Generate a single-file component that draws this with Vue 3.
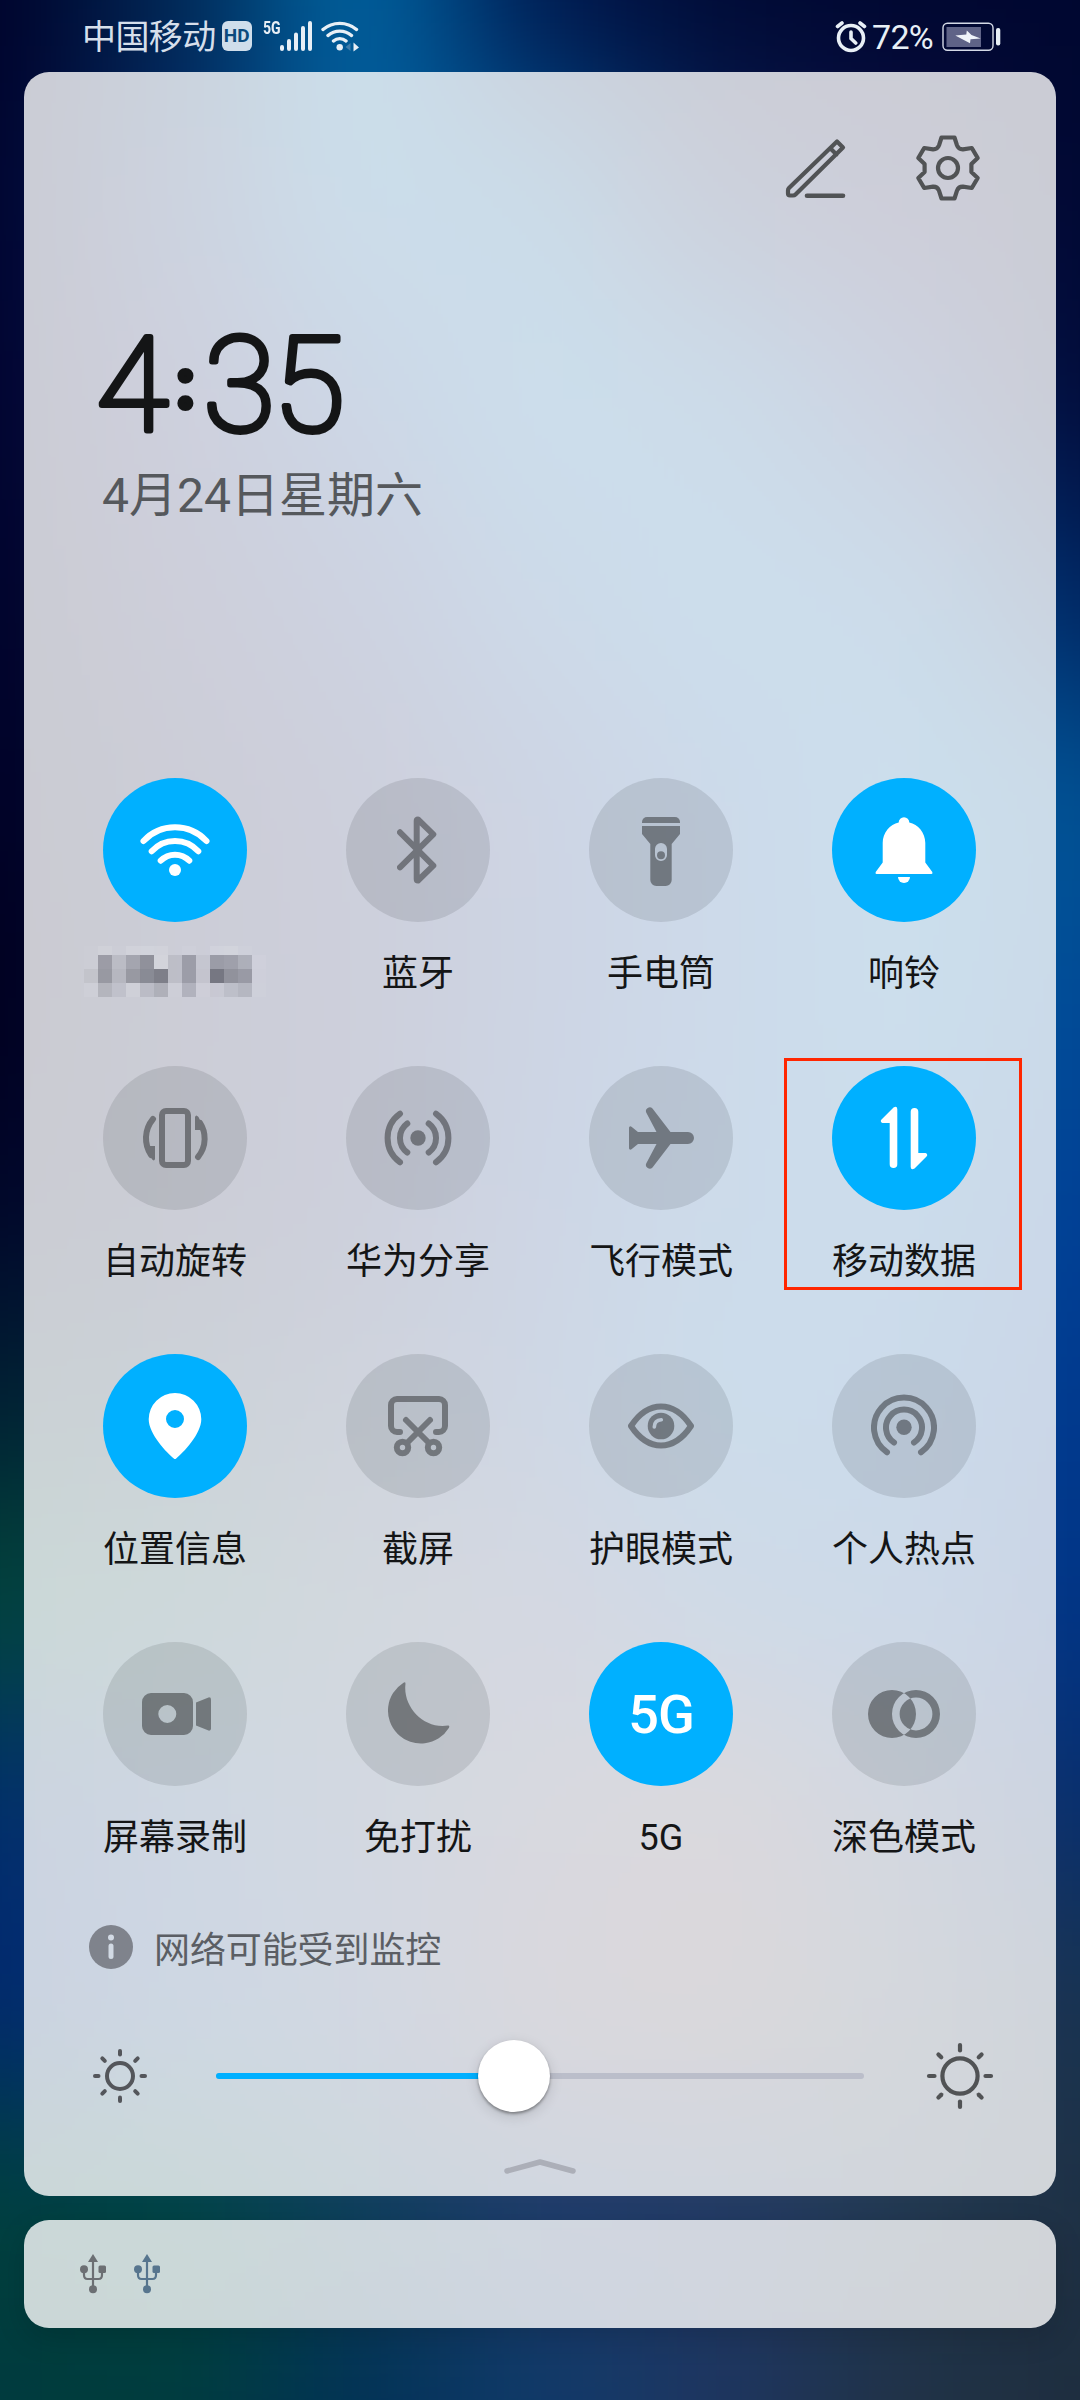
<script setup>
const meshX = [0, 180, 360, 540, 720, 900, 1080]
const meshRows = [
  ['0,2,42', '0,40,84', '0,104,166', '0,24,78', '0,10,52', '0,7,48', '0,7,48'],
  ['0,3,46', '8,42,106', '4,96,160', '2,86,150', '10,30,85', '12,14,70', '0,8,50'],
  ['0,3,46', '18,26,92', '10,62,138', '4,98,166', '5,85,153', '14,42,112', '0,10,55'],
  ['0,3,42', '12,20,76', '15,38,110', '10,76,150', '5,97,167', '5,87,157', '0,35,95'],
  ['0,2,38', '5,12,62', '15,25,85', '15,50,125', '10,76,156', '5,101,171', '0,80,145'],
  ['0,0,30', '5,12,60', '12,24,82', '15,50,125', '10,76,156', '5,100,168', '0,72,148'],
  ['0,5,40', '5,14,60', '12,24,84', '15,55,130', '10,82,158', '5,90,162', '0,62,148'],
  ['0,32,50', '5,36,66', '25,45,90', '20,62,130', '5,90,162', '5,80,158', '0,55,140'],
  ['0,70,58', '14,72,76', '38,65,95', '50,65,115', '20,76,142', '10,75,150', '0,50,132'],
  ['0,46,106', '20,60,120', '40,70,112', '65,70,105', '80,70,90', '42,65,112', '5,45,110'],
  ['0,38,110', '15,64,128', '38,62,120', '75,65,90', '80,65,80', '50,65,90', '22,50,80'],
  ['0,64,62', '0,70,66', '15,65,92', '30,60,110', '32,60,105', '34,58,82', '30,48,68'],
  ['0,58,62', '0,60,60', '0,48,85', '15,58,105', '30,52,95', '32,50,70', '30,45,62'],
]
const cells = meshRows.flatMap((row, r) =>
  row.map((c, i) => ({
    x: i === 0 ? -400 : meshX[i] - 90,
    w: i === 0 ? 491 : i === 6 ? 490 : 181,
    y: r === 0 ? -400 : r * 200 - 100,
    h: r === 0 ? 501 : r === 12 ? 500 : 201,
    fill: `rgb(${c})`,
  })),
)

const tiles = [
  { id: 'wifi', label: '', on: true },
  { id: 'bluetooth', label: '蓝牙' },
  { id: 'torch', label: '手电筒' },
  { id: 'bell', label: '响铃', on: true },
  { id: 'rotate', label: '自动旋转' },
  { id: 'share', label: '华为分享' },
  { id: 'plane', label: '飞行模式' },
  { id: 'data', label: '移动数据', on: true, marked: true },
  { id: 'location', label: '位置信息', on: true },
  { id: 'screenshot', label: '截屏' },
  { id: 'eye', label: '护眼模式' },
  { id: 'hotspot', label: '个人热点' },
  { id: 'record', label: '屏幕录制' },
  { id: 'moon', label: '免打扰' },
  { id: 'fiveg', label: '5G', on: true },
  { id: 'dark', label: '深色模式' },
]

// Shade of every mosaic cell that hides the network name; negative is lighter than the panel
const mosaic = [
  [-3, -10, -3, -12, -12, -10, 0, -5, 0, -10, -12, -5, 0],
  [-3, 23, 8, 19, 29, -14, 7, 23, 3, 24, 22, 15, -6],
  [4, 25, 10, 25, 32, 38, 7, 23, 4, 42, 29, 25, -4],
  [-7, 11, 5, -8, 8, 14, -3, 13, -4, 2, 7, 11, -5],
].flat()
const shade = (v) => (v < 0 ? `rgba(255,255,255,${-v / 100})` : `rgba(0,0,12,${v / 100})`)
const rays = [0, 45, 90, 135, 180, 225, 270, 315]
</script>

<template>
  <div class="screen">
    <svg class="wallpaper" viewBox="0 0 1080 2400" aria-hidden="true">
      <defs>
        <filter id="soft" filterUnits="userSpaceOnUse" x="-400" y="-400" width="1880" height="3200" color-interpolation-filters="sRGB">
          <feGaussianBlur stdDeviation="74 82" />
        </filter>
      </defs>
      <g filter="url(#soft)">
        <rect v-for="(c, i) in cells" :key="i" :x="c.x" :y="c.y" :width="c.w" :height="c.h" :fill="c.fill" />
      </g>
    </svg>

    <header class="status">
      <span class="carrier">中国移动</span>
      <span class="hd">HD</span>
      <span class="net">5G</span>
      <svg class="bars" width="32" height="30" viewBox="0 0 32 30" stroke="#e8eff6" stroke-width="4" stroke-linecap="round">
        <path d="M2 26v2M9 20v8M16 13.5V28M23 7v21M30 2v26" />
      </svg>
      <svg class="swifi" width="38" height="32" viewBox="0 0 38 32" fill="none" stroke="#e8eff6" stroke-width="3.4" stroke-linecap="round">
        <path d="M2 9.5A26 26 0 0 1 35.500 9.500M7 15.500A18 18 0 0 1 30.500 15.500M12.500 21A9.500 9.500 0 0 1 25 21" />
        <circle cx="18.700" cy="27.200" r="3.200" fill="#e8eff6" stroke="none" />
        <path d="M24.500 27l5-4v8z" fill="#3f7cab" stroke="none" />
        <path d="M32.500 22.500l5.500 5-5.500 4z" fill="#e8eff6" stroke="none" />
      </svg>
      <svg class="alarm" width="32" height="34" viewBox="0 0 32 34" fill="none" stroke="#e8eff6" stroke-width="3.600" stroke-linecap="round">
        <circle cx="16" cy="19" r="12.500" />
        <path d="M16 13v6.500l4.700 4.500M2.500 7.500L7 4M25 4l4.500 3.500" />
      </svg>
      <span class="percent">72%</span>
      <svg class="battery" width="60" height="30" viewBox="0 0 60 30">
        <rect x="1" y="1.300" width="50" height="27" rx="4.500" fill="none" stroke="#d4d9e6" stroke-width="1.400" />
        <rect x="4.500" y="5" width="34.500" height="20" fill="#5f6387" />
        <path d="M13.300 13.500L24.300 12.500L24.800 8.500L29.500 13L38.700 16.500L28.500 17.200L28 21.300Z" fill="#f0f4fa" />
        <rect x="54" y="6" width="4.300" height="17.500" rx="2" fill="#e8eff6" />
      </svg>
    </header>

    <main class="panel">
      <div class="actions">
        <svg width="64" height="66" viewBox="783 135 64 66" fill="none" stroke="#515355" stroke-width="4.200" stroke-linejoin="round" stroke-linecap="round">
          <path d="M837 141.500l6 6L795.500 194.500Q794.500 195.500 793 195.500H790Q788 195.500 788 193.500V190.500Q788 189 789 188ZM830.500 148.500l6 6" />
          <path d="M807 195.700H843" stroke-width="4.600" />
        </svg>
        <svg width="66" height="66" viewBox="-33 -33 66 66" fill="none" stroke="#515355" stroke-width="4.200" stroke-linejoin="round">
          <path d="M-6.500 -30.500H6.500L9 -22.600Q10.500 -18.500 14.900 -18.600L23.800 -20L29.700 -10L23.400 -4V4L29.700 10L23.800 20L14.900 18.600Q10.500 18.500 9 22.600L6.500 30.500H-6.500L-9 22.600Q-10.500 18.500 -14.900 18.600L-23.800 20L-29.700 10L-23.400 4V-4L-29.700 -10L-23.800 -20L-14.900 -18.600Q-10.500 -18.500 -9 -22.600Z" />
          <circle r="10" />
        </svg>
      </div>

      <svg class="time" width="280" height="180" viewBox="80 295 280 180">
        <text x="96.500" y="431">4</text>
        <text class="colon" x="185.500" y="407" text-anchor="middle">:</text>
        <text x="203.500" y="431">3</text>
        <text x="273" y="431">5</text>
      </svg>
      <div class="date">4月24日星期六</div>

      <section class="grid">
        <div v-for="t in tiles" :key="t.id" class="tile">
          <div class="disc" :class="{ on: t.on }">
            <span v-if="t.id === 'fiveg'" class="g5">5G</span>
            <svg v-else width="144" height="144" viewBox="-72 -72 144 144" stroke-linecap="round" stroke-linejoin="round">
              <g v-if="t.id === 'wifi'" class="line">
                <path d="M-31.500 -9A43 43 0 0 1 31.500 -9M-23.300 1.300A31.500 31.500 0 0 1 23.300 1.300M-14.300 10.700A20 20 0 0 1 14.300 10.700" />
                <circle cy="20" r="6" class="fill" />
              </g>
              <path v-else-if="t.id === 'bluetooth'" class="line" d="M-18 -17.700L15.300 15.700L0 30.500Q-1.300 30.500 -1.300 29V-29Q-1.300 -30.500 0 -30.500L15.300 -15.700L-18 17.300" />
              <g v-else-if="t.id === 'torch'" class="fill">
                <path d="M-19 -27v-1a5 5 0 0 1 5 -5H14a5 5 0 0 1 5 5v1z" />
                <path fill-rule="evenodd" d="M-19 -24H19V-16L10.700 -6V30a6 6 0 0 1 -6 6H-4.700a6 6 0 0 1 -6 -6V-6L-19 -16ZM-6 -1V5a6 6 0 0 0 12 0V-1a6 6 0 0 0 -12 0Z" />
                <circle cy="5.200" r="4" />
              </g>
              <g v-else-if="t.id === 'bell'" class="fill">
                <path d="M-5.300 -27.500A5.300 5.300 0 0 1 5.300 -27.500C14 -25.500 21.300 -17.500 21.300 -7V12.500L28.300 22Q29 24 27.500 24H-27.500Q-29 24 -28.300 22L-21.300 12.500V-7C-21.300 -17.500 -14 -25.500 -5.300 -27.500Z" />
                <path d="M-6 27H6A6 6 0 0 1 -6 27Z" />
              </g>
              <g v-else-if="t.id === 'rotate'" class="line">
                <rect x="-13" y="-27" width="26" height="54" rx="4" />
                <path d="M-22 -19C-31 -8 -31 6 -24 17M23 19C32 8 31 -6 25 -15" />
                <path class="fill" d="M-29 8H-20V21Q-21 24 -23.500 20.500L-28 12ZM29 -8H20V-21Q21 -24 23.500 -21L28 -12Z" />
              </g>
              <g v-else-if="t.id === 'share'" class="line">
                <circle r="7.700" class="fill" />
                <path d="M-18 -24.300A30 30 0 0 0 -18 24.300M18 -24.300A30 30 0 0 1 18 24.300M-10.700 -14.500A18 18 0 0 0 -10.700 14.500M10.700 -14.500A18 18 0 0 1 10.700 14.500" />
              </g>
              <path v-else-if="t.id === 'plane'" class="fill" d="M-32 -10.500Q-31 -12.500 -29.500 -11.300L-23 -6H-4.500L-14.800 -25.500A3.800 3.800 0 0 1 -8.500 -29.500L9.500 -6H27A6 6 0 0 1 27 6H9.500L-8.500 29.500A3.800 3.800 0 0 1 -14.800 25.500L-4.500 6H-23L-29.500 11.300Q-31 12.500 -32 10.500Z" />
              <g v-else-if="t.id === 'data'" class="fill">
                <path v-for="a in [0, 180]" :key="a" :transform="`rotate(${a})`" d="M-14.300 -15H-21.500A2 2 0 0 1 -22.500 -18.500L-10.500 -30.500Q-7 -32.500 -6.700 -29V26.200A3.800 3.800 0 0 1 -14.300 26.200Z" />
              </g>
              <path v-else-if="t.id === 'location'" class="fill" fill-rule="evenodd" d="M1.200 32.500Q0 33.500 -1.200 32.500C-8 27 -26.300 8 -26.300 -6.700A26.300 26.300 0 0 1 26.300 -6.700C26.300 8 8 27 1.200 32.500ZM-9 -7A9 9 0 0 0 9 -7A9 9 0 0 0 -9 -7Z" />
              <g v-else-if="t.id === 'screenshot'" class="line">
                <path d="M-18 6H-21A6 6 0 0 1 -27 0V-21A6 6 0 0 1 -21 -27H21A6 6 0 0 1 27 -21V0A6 6 0 0 1 21 6H18" />
                <path d="M-12 -6L11 17M12 -6L-11 17" />
                <circle cx="-15.500" cy="21.500" r="5.700" />
                <circle cx="15.500" cy="21.500" r="5.700" />
              </g>
              <g v-else-if="t.id === 'eye'" class="line">
                <mask id="glint">
                  <rect x="-20" y="-20" width="40" height="40" fill="#fff" />
                  <path d="M-6.700 1Q-6.500 -5.800 0.300 -6.200" stroke="#000" stroke-width="3.600" fill="none" />
                </mask>
                <path d="M-30 0C-21 -13.500 -10 -19.500 0 -19.500S21 -13.500 30 0C21 13.500 10 19.500 0 19.500S-21 13.500 -30 0Z" />
                <circle r="13.300" class="fill" mask="url(#glint)" />
              </g>
              <g v-else-if="t.id === 'hotspot'" class="line">
                <circle cy="1.300" r="7.700" class="fill" />
                <path d="M-17 26.300A30 30 0 1 1 17 26.300M-10 16.500A18 18 0 1 1 10 16.500" />
              </g>
              <g v-else-if="t.id === 'record'" class="fill">
                <path fill-rule="evenodd" d="M-24 -21H9A9 9 0 0 1 18 -12V12A9 9 0 0 1 9 21H-24A9 9 0 0 1 -33 12V-12A9 9 0 0 1 -24 -21ZM-16.700 0A9 9 0 0 0 1.300 0A9 9 0 0 0 -16.700 0Z" />
                <path d="M21 -11.500L33.500 -16.600Q36 -17 36 -14.500V14.500Q36 17 33.500 16.600L21 11.500Z" />
              </g>
              <path v-else-if="t.id === 'moon'" class="fill" d="M-14.500 -31.300Q-12.500 -32.500 -12.500 -30.300C-15.500 -7 6 15.500 30 11.600Q32 11.500 31 13.700A32.900 32.900 0 1 1 -14.500 -31.300Z" />
              <path v-else class="fill" fill-rule="evenodd" d="M-36 0A24 24 0 0 1 12 0A24 24 0 0 1 -36 0ZM-12 0A24 24 0 0 1 36 0A24 24 0 0 1 -12 0ZM-4.400 0A16.400 16.400 0 0 1 28.400 0A16.400 16.400 0 0 1 -4.400 0Z" />
            </svg>
          </div>
          <div v-if="t.label" class="label">{{ t.label }}</div>
          <div v-else class="mosaic">
            <i v-for="(v, i) in mosaic" :key="i" :style="{ background: shade(v) }"></i>
          </div>
          <div v-if="t.marked" class="mark"></div>
        </div>
      </section>

      <div class="notice">
        <svg width="44" height="44" viewBox="-22 -22 44 44">
          <circle r="22" fill="#7f838c" />
          <circle cy="-9.500" r="3" fill="#d2dae4" />
          <path d="M0 -1V9.500" stroke="#d2dae4" stroke-width="5" stroke-linecap="round" />
        </svg>
        <span>网络可能受到监控</span>
      </div>

      <div class="brightness">
        <svg width="56" height="56" viewBox="-28 -28 56 56" fill="none" stroke="#54565b" stroke-width="4" stroke-linecap="round">
          <circle r="13" />
          <path v-for="a in rays" :key="a" d="M0 -21.500V-25" :transform="`rotate(${a})`" />
        </svg>
        <div class="track"><div class="level"></div><div class="knob"></div></div>
        <svg width="68" height="68" viewBox="-34 -34 68 68" fill="none" stroke="#515355" stroke-width="4.200" stroke-linecap="round">
          <circle r="17.600" />
          <path v-for="a in rays" :key="a" :d="a % 90 ? 'M0 -26.500V-30.500' : 'M0 -25.500V-31'" :transform="`rotate(${a})`" />
        </svg>
      </div>

      <svg class="chevron" width="76" height="20" viewBox="0 0 76 20" fill="none" stroke="#acafb8" stroke-width="5.500" stroke-linecap="round" stroke-linejoin="round">
        <path d="M5 14L38 5L71 14" />
      </svg>
    </main>

    <footer class="tray">
      <svg v-for="c in ['#6c6f73', '#57758e']" :key="c" width="28" height="42" viewBox="-14 0 28 42" :fill="c">
        <path d="M0 1L5 9H-5Z" />
        <path d="M0 6V35M-9 16V22Q-9 26 -5.500 26H5.500Q9 26 9 22V16" fill="none" :stroke="c" stroke-width="2.200" />
        <circle cy="36.300" r="4" />
        <circle cx="-9" cy="16.300" r="4" />
        <rect x="5.500" y="12.500" width="7.500" height="7.500" rx="1.500" />
      </svg>
    </footer>
  </div>
</template>

<style>
body {
  margin: 0;
  background: #00052f;
}
</style>

<style scoped>
.screen {
  position: relative;
  width: 1080px;
  height: 2400px;
  overflow: hidden;
  font-family: Roboto, "Noto Sans CJK SC", sans-serif;
}
.wallpaper {
  position: absolute;
  inset: 0;
  width: 1080px;
  height: 2400px;
}
.status {
  position: relative;
  display: flex;
  align-items: center;
  box-sizing: border-box;
  height: 72px;
  padding: 0 78px 0 82px;
  color: #e8eff6;
}
.carrier {
  padding-top: 2px;
  font-size: 34px;
  letter-spacing: -0.6px;
  line-height: 72px;
  color: #d6dfeb;
}
.hd {
  width: 30px;
  height: 30px;
  margin-left: 6px;
  border-radius: 6px;
  background: #cfdeeb;
  color: #0c4a7c;
  font-size: 19px;
  font-weight: 700;
  line-height: 30px;
  text-align: center;
}
.net {
  width: 17px;
  height: 30px;
  margin-left: 11px;
  font-size: 19px;
  font-weight: 700;
  line-height: 14px;
  transform: scaleX(0.74);
  transform-origin: left;
}
.bars {
  margin-left: 0;
}
.swifi {
  margin-left: 9px;
}
.alarm {
  margin-left: auto;
}
.percent {
  margin: 0 9px 0 5px;
  padding-top: 2px;
  font-size: 34px;
  letter-spacing: -0.7px;
}
.battery {
  padding-top: 2px;
}
.panel {
  position: relative;
  display: flex;
  flex-direction: column;
  box-sizing: border-box;
  height: 2124px;
  margin: 0 24px;
  border-radius: 25px;
  background: rgba(254, 254, 254, 0.8);
}
.actions {
  display: flex;
  justify-content: flex-end;
  gap: 68px;
  margin: 63px 75px 0 0;
  height: 66px;
}
.time {
  margin: 94px 0 0 56px;
  overflow: visible;
  font-size: 131px;
  font-weight: 100;
  fill: #141516;
  stroke: #141516;
  stroke-width: 6px;
  stroke-linejoin: round;
}
.time .colon {
  font-size: 66px;
  font-weight: 500;
  stroke-width: 7px;
}
.date {
  margin: -15px 0 0 78px;
  height: 72px;
  font-size: 48px;
  line-height: 72px;
  color: #55585c;
}
.grid {
  display: grid;
  grid-template-columns: repeat(4, 243px);
  grid-auto-rows: 288px;
  margin: 246px 0 0 29.5px;
}
.tile {
  position: relative;
  display: flex;
  flex-direction: column;
  align-items: center;
}
.disc {
  display: flex;
  align-items: center;
  justify-content: center;
  width: 144px;
  height: 144px;
  border-radius: 50%;
  background: rgba(0, 6, 10, 0.1);
}
.disc svg {
  opacity: 0.38;
  color: #000;
}
.disc.on {
  background: #00b0ff;
}
.disc.on svg {
  opacity: 1;
  color: #fff;
}
.line {
  fill: none;
  stroke: currentColor;
  stroke-width: 6px;
}
.fill {
  fill: currentColor;
  stroke: none;
}
.g5 {
  font-size: 54px;
  font-weight: 500;
  letter-spacing: -1px;
  color: #fff;
}
.label {
  margin-top: 25px;
  height: 54px;
  font-size: 36px;
  line-height: 54px;
  color: #141516;
  white-space: nowrap;
}
.mosaic {
  display: grid;
  grid-template-columns: repeat(13, 14px);
  grid-template-rows: 9px 14px 14px 14px;
  margin-top: 24px;
}
.mark {
  position: absolute;
  left: 1.5px;
  top: -8px;
  box-sizing: border-box;
  width: 238px;
  height: 232px;
  border: 3px solid #ff2600;
}
.notice {
  display: flex;
  align-items: center;
  gap: 21px;
  height: 54px;
  margin: -10px 0 0 65px;
  font-size: 36px;
  letter-spacing: -0.1px;
  line-height: 54px;
  color: #5b5e64;
}
.notice span {
  padding-top: 8px;
}
.brightness {
  display: flex;
  align-items: center;
  height: 72px;
  margin: 66px 62px 0 68px;
}
.track {
  position: relative;
  width: 648px;
  height: 6px;
  margin: 0 62px 0 68px;
  border-radius: 3px;
  background: #bbbeca;
}
.level {
  width: 298px;
  height: 6px;
  border-radius: 3px;
  background: #00b0ff;
}
.knob {
  position: absolute;
  left: 262px;
  top: -33px;
  width: 72px;
  height: 72px;
  border-radius: 50%;
  background: #fff;
  box-shadow: 0 2px 3px rgba(0, 0, 0, 0.35), 0 4px 14px rgba(0, 0, 0, 0.14);
}
.chevron {
  margin: 45px auto 0;
}
.tray {
  position: relative;
  display: flex;
  align-items: center;
  gap: 26px;
  box-sizing: border-box;
  height: 108px;
  margin: 24px 24px 0;
  padding-left: 55px;
  border-radius: 25px;
  background: rgba(254, 254, 254, 0.8);
  box-shadow: 0 10px 30px rgba(0, 0, 0, 0.14);
}
</style>
